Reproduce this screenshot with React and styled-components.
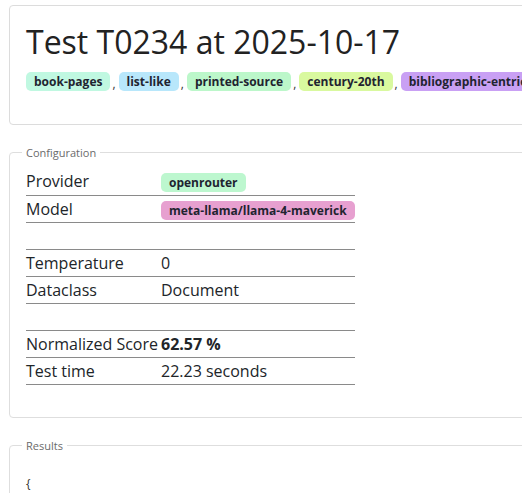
import React from "react";
import styled, { createGlobalStyle } from "styled-components";

const GlobalStyle = createGlobalStyle`
  html, body {
    margin: 0;
    padding: 0;
    overflow: hidden;
    background: #fff;
  }
  body {
    font-family: "Open Sans", "Liberation Sans", sans-serif;
    color: #212529;
  }
`;

const Page = styled.div`
  width: 700px;
  padding: 5px 0 0 9px;
  display: flex;
  flex-direction: column;
  gap: 20px;
`;

const HeaderCard = styled.section`
  border: 1px solid #dcdcdc;
  border-radius: 4px;
  padding: 16px 16px 33px 16px;
`;

const Title = styled.h1`
  margin: 0 0 10px 0;
  font-size: 32px;
  font-weight: 400;
  line-height: 40px;
  color: #222;
`;

const TagList = styled.div`
  display: flex;
  align-items: center;
  white-space: nowrap;
  font-size: 12px;
`;

const Tag = styled.span`
  display: inline-block;
  background: ${(p) => p.$bg};
  border-radius: 5px;
  padding: 0 8px;
  height: 19px;
  line-height: 19px;
  font-size: 12px;
  font-weight: 700;
  color: #1f2430;
`;

const Comma = styled.span`
  color: #333;
  padding: 0 3px 0 2px;
  position: relative;
  top: 2px;
`;

const Fieldset = styled.fieldset`
  margin: 0;
  border: 1px solid #dedede;
  border-radius: 4px;
  padding: ${(p) => p.$top || "8px"} 16px 32px 16px;
`;

const Legend = styled.legend`
  font-size: 11px;
  color: #6b6b6b;
  padding: 0 4px;
  margin-left: -4px;
`;

const Table = styled.table`
  border-collapse: collapse;
  width: 329px;
  font-size: 16px;
`;

const Row = styled.tr`
  height: 27px;
  border-bottom: 1px solid #8a8a8a;
`;

const Label = styled.td`
  width: 135px;
  padding: 0;
  white-space: nowrap;
`;

const Value = styled.td`
  padding: 0;
  font-weight: ${(p) => (p.$bold ? 700 : 400)};
`;

const Code = styled.pre`
  margin: 18px 0 0 0;
  font-family: "Open Sans", "Liberation Sans", sans-serif;
  font-size: 12px;
  color: #333;
  height: 20px;
`;

const tags = [
  ["book-pages", "#c0f8e1"],
  ["list-like", "#b8e7fb"],
  ["printed-source", "#bcf7ca"],
  ["century-20th", "#d9f99f"],
  ["bibliographic-entries", "#c9a0f4"],
];

const rows = [
  ["Provider", <Tag $bg="#bdf7cf">openrouter</Tag>],
  ["Model", <Tag $bg="#e7a0d0">meta-llama/llama-4-maverick</Tag>],
  ["", ""],
  ["Temperature", "0"],
  ["Dataclass", "Document"],
  ["", ""],
  ["Normalized Score", "62.57 %", true],
  ["Test time", "22.23 seconds"],
];

export default function App() {
  return (
    <>
      <GlobalStyle />
      <Page>
        <HeaderCard>
          <Title>Test T0234 at 2025-10-17</Title>
          <TagList>
            {tags.map(([t, c], i) => (
              <React.Fragment key={t}>
                {i > 0 && <Comma>,</Comma>}
                <Tag $bg={c}>{t}</Tag>
              </React.Fragment>
            ))}
          </TagList>
        </HeaderCard>

        <Fieldset>
          <Legend>Configuration</Legend>
          <Table>
            <tbody>
              {rows.map(([l, v, b], i) => (
                <Row key={i}>
                  <Label>{l}</Label>
                  <Value $bold={b}>{v}</Value>
                </Row>
              ))}
            </tbody>
          </Table>
        </Fieldset>

        <Fieldset $top="4px">
          <Legend>Results</Legend>
          <Code>{"{"}</Code>
        </Fieldset>
      </Page>
    </>
  );
}
